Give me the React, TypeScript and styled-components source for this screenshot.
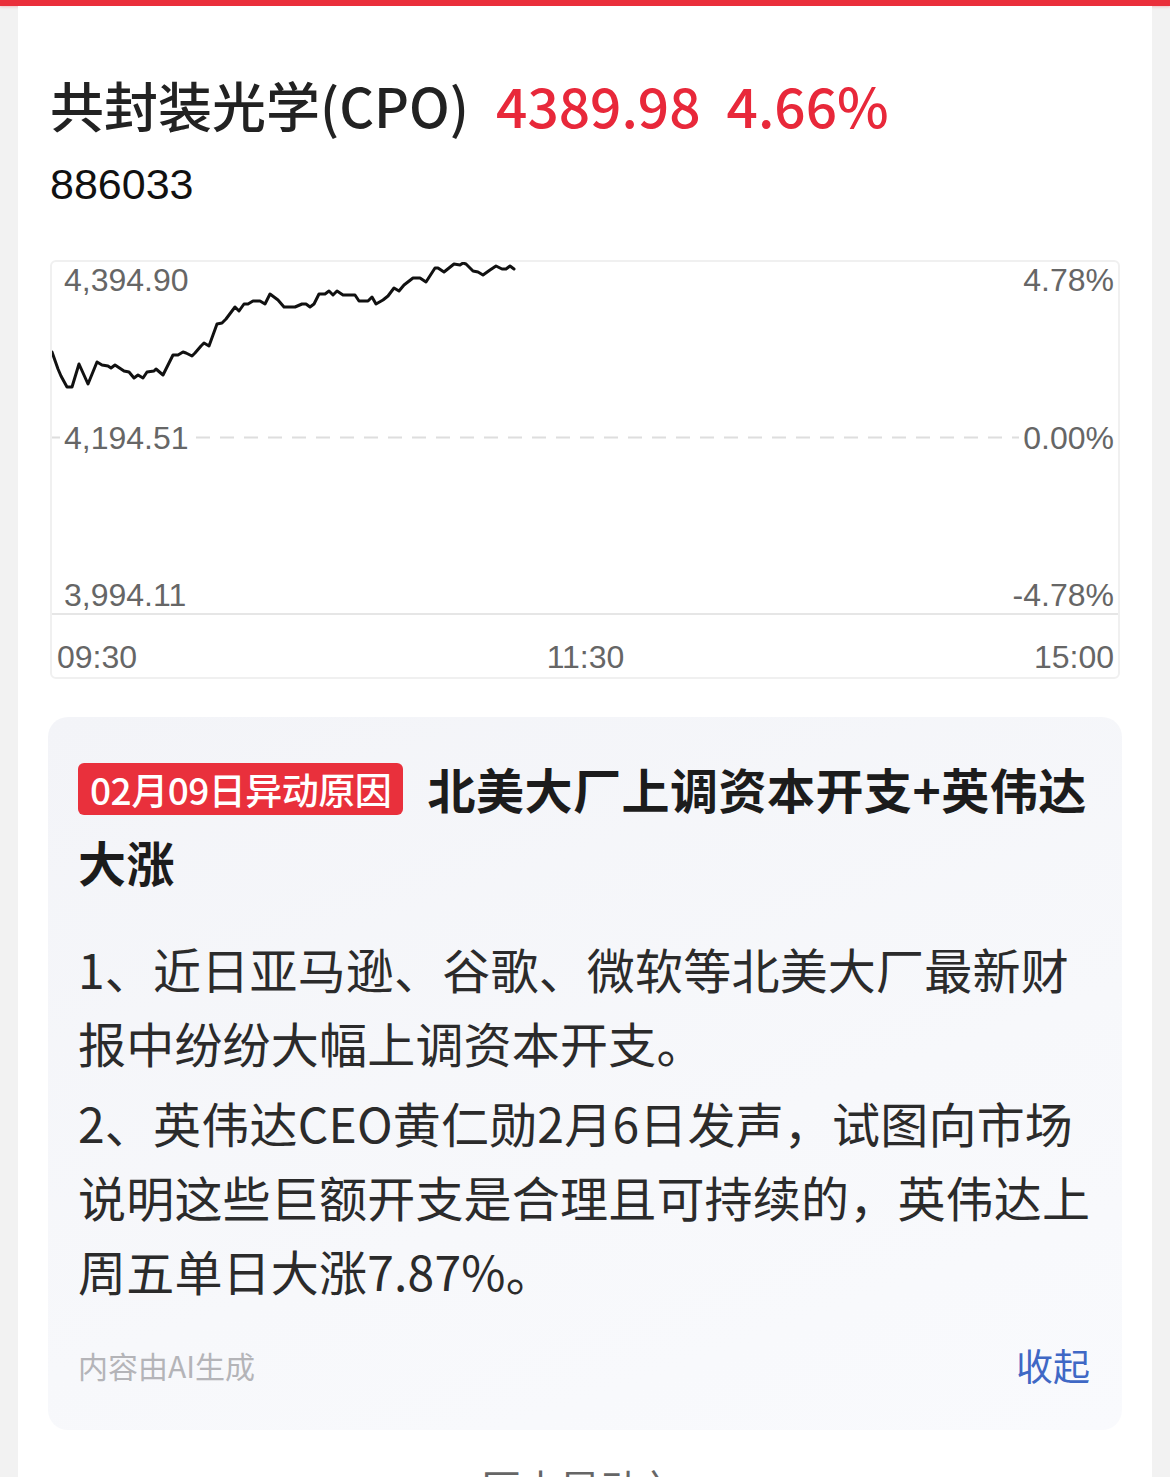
import React from "react";
import styled, { createGlobalStyle } from "styled-components";

const GlobalStyle = createGlobalStyle`
  html, body {
    margin: 0;
    padding: 0;
    background: #f2f2f2;
  }
  body {
    font-family: "Noto Sans CJK SC", "Liberation Sans", sans-serif;
    overflow: hidden;
  }
`;

const TopBar = styled.div`
  height: 6px;
  background: #ea2f3b;
  box-shadow: 0 1px 3px rgba(234, 47, 59, 0.25);
`;

const Sheet = styled.div`
  margin: 0 18px;
  background: #ffffff;
  min-height: 1471px;
  padding: 0 30px;
  box-sizing: border-box;
`;

const Header = styled.div`
  padding: 66px 2px 0;
`;

const TitleRow = styled.div`
  display: flex;
  align-items: baseline;
  gap: 27px;
  line-height: 65px;
  font-size: 54px;
  font-weight: 500;
`;

const Name = styled.span`
  color: #222222;
`;

const Quote = styled.span`
  color: #e8283a;
  font-size: 55px;
  display: flex;
  gap: 26px;
`;

const Code = styled.div`
  margin-top: 22px;
  font-family: "Liberation Sans", sans-serif;
  font-size: 43px;
  line-height: 50px;
  color: #111111;
`;

const ChartBox = styled.div`
  margin: 51px 2px 0;
  border: 2px solid #f0f0f0;
  border-radius: 6px;
  overflow: hidden;
`;

const Plot = styled.div`
  position: relative;
  height: 351px;
  border-bottom: 2px solid #e6e6e6;
`;

const PlotSvg = styled.svg`
  position: absolute;
  inset: 0;
  width: 100%;
  height: 100%;
`;

const LabelStack = styled.div`
  position: relative;
  height: 100%;
  display: flex;
  flex-direction: column;
  justify-content: space-between;
`;

const LabelRow = styled.div`
  display: flex;
  justify-content: space-between;
  padding: 0 0 0 8px;
`;

const AxisLabel = styled.span`
  font-family: "Liberation Sans", sans-serif;
  font-size: 32px;
  line-height: 36px;
  color: #666666;
  padding: 0 4px;
  background: ${(p: { $mask?: boolean }) => (p.$mask ? "#ffffff" : "transparent")};
`;

const TimeAxis = styled.div`
  height: 62px;
  display: flex;
  justify-content: space-between;
  align-items: flex-end;
  padding: 0 0 2px 1px;
  box-sizing: border-box;
`;

const AiCard = styled.div`
  margin-top: 38px;
  border-radius: 20px;
  background: linear-gradient(160deg, #f3f4f8 0%, #f7f8fb 60%, #f9fafd 100%);
  padding: 35px 30px 40px 30px;
`;

const Headline = styled.div`
  font-size: 48px;
  line-height: 73px;
  font-weight: 700;
  color: #1c1c1c;
  letter-spacing: 0.5px;
  white-space: nowrap;
`;

const Badge = styled.span`
  display: inline-block;
  vertical-align: 4px;
  background: #e9303c;
  color: #ffffff;
  font-size: 37px;
  font-weight: 500;
  line-height: 52px;
  padding: 0 12px;
  border-radius: 6px;
  margin-right: 24px;
  letter-spacing: -0.5px;
`;

const Body = styled.div`
  margin-top: 33px;
  display: flex;
  flex-direction: column;
  gap: 6px;
`;

const Para = styled.p`
  margin: 0;
  font-size: 48px;
  line-height: 74px;
  color: #2b2b2b;
  letter-spacing: 0.2px;
  white-space: nowrap;
`;

const Footer = styled.div`
  margin-top: 33px;
  display: flex;
  justify-content: space-between;
  align-items: center;
  height: 50px;
`;

const AiNote = styled.span`
  font-size: 30px;
  color: #b4b4b8;
`;

const Collapse = styled.span`
  font-size: 37px;
  color: #3f68c5;
  padding-right: 2px;
`;

const HistoryLink = styled.div`
  margin-top: 29px;
  text-align: center;
  font-size: 40px;
  line-height: 56px;
  color: #666666;
`;

const pricePoints = [
  [52, 352], [58, 369], [61, 376], [67, 387], [72, 387], [79, 364], [88, 384],
  [97, 362], [102, 365], [108, 366], [111, 368], [115, 365], [124, 371],
  [129, 372], [134, 378], [138, 375], [143, 378], [147, 372], [154, 371],
  [156, 369], [163, 375], [173, 355], [178, 355], [183, 352], [186, 353],
  [192, 356], [195, 353], [201, 346], [204, 343], [209, 346], [217, 324],
  [222, 323], [226, 319], [235, 307], [239, 311], [244, 304], [248, 304],
  [253, 301], [260, 301], [265, 304], [270, 294], [278, 300], [284, 307],
  [295, 307], [302, 304], [306, 304], [310, 307], [314, 304], [319, 294],
  [325, 294], [329, 291], [333, 295], [337, 291], [343, 295], [355, 295],
  [359, 301], [368, 301], [372, 297], [376, 304], [383, 300], [388, 296],
  [394, 288], [399, 291], [404, 285], [413, 278], [420, 278], [426, 282],
  [435, 268], [438, 268], [444, 272], [454, 264], [460, 265], [463, 263],
  [466, 264], [473, 271], [478, 272], [483, 275], [490, 270], [496, 266],
  [502, 269], [506, 269], [510, 266], [514, 269],
];

export default function App() {
  const line = pricePoints.map((p) => p.join(",")).join(" ");

  return (
    <>
      <GlobalStyle />
      <TopBar />
      <Sheet>
        <Header>
          <TitleRow>
            <Name>共封装光学(CPO)</Name>
            <Quote>
              <span>4389.98</span>
              <span>4.66%</span>
            </Quote>
          </TitleRow>
          <Code>886033</Code>
        </Header>

        <ChartBox>
          <Plot>
            <PlotSvg viewBox="52 262 1066 351" preserveAspectRatio="none">
              <line
                x1="52"
                y1="437.5"
                x2="1118"
                y2="437.5"
                stroke="#dedede"
                strokeWidth="2"
                strokeDasharray="14 10"
              />
              <polyline
                points={line}
                fill="none"
                stroke="#111111"
                strokeWidth="3"
                strokeLinejoin="round"
                strokeLinecap="round"
              />
            </PlotSvg>
            <LabelStack>
              <LabelRow>
                <AxisLabel>4,394.90</AxisLabel>
                <AxisLabel>4.78%</AxisLabel>
              </LabelRow>
              <LabelRow>
                <AxisLabel $mask>4,194.51</AxisLabel>
                <AxisLabel $mask>0.00%</AxisLabel>
              </LabelRow>
              <LabelRow>
                <AxisLabel>3,994.11</AxisLabel>
                <AxisLabel>-4.78%</AxisLabel>
              </LabelRow>
            </LabelStack>
          </Plot>
          <TimeAxis>
            <AxisLabel>09:30</AxisLabel>
            <AxisLabel>11:30</AxisLabel>
            <AxisLabel>15:00</AxisLabel>
          </TimeAxis>
        </ChartBox>

        <AiCard>
          <Headline>
            <Badge>02月09日异动原因</Badge>
            北美大厂上调资本开支+英伟达
            <br />
            大涨
          </Headline>
          <Body>
            <Para>
              1、近日亚马逊、谷歌、微软等北美大厂最新财
              <br />
              报中纷纷大幅上调资本开支。
            </Para>
            <Para>
              2、英伟达CEO黄仁勋2月6日发声，试图向市场
              <br />
              说明这些巨额开支是合理且可持续的，英伟达上
              <br />
              周五单日大涨7.87%。
            </Para>
          </Body>
          <Footer>
            <AiNote>内容由AI生成</AiNote>
            <Collapse>收起</Collapse>
          </Footer>
        </AiCard>

        <HistoryLink>历史异动 〉</HistoryLink>
      </Sheet>
    </>
  );
}
